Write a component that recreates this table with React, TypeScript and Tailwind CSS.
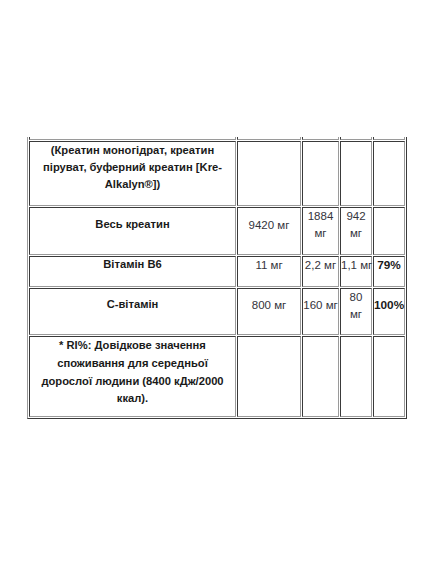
import React from "react";

const cell =
  "p-0 align-middle text-center border border-t-[#3a3a3a] border-l-[#3a3a3a] border-r-[#9a9a9a] border-b-[#9a9a9a]";
const cellTop =
  "p-0 align-top text-center border border-t-[#3a3a3a] border-l-[#3a3a3a] border-r-[#9a9a9a] border-b-[#9a9a9a]";
const lab =
  "font-bold text-[11.2px] leading-[17px] text-[#1a1a1a] -mt-[1px] pb-[13px] whitespace-nowrap";
const num = "text-[11.5px] leading-[17px] text-[#34343c] pb-[12px] whitespace-nowrap";
const num2 = "text-[11.5px] leading-[17px] text-[#34343c] pb-[11px] whitespace-nowrap";
const pct = "font-bold text-[11.8px] leading-[17px] text-[#1a1a1a] pb-[12px] whitespace-nowrap";

export default function App() {
  return (
    <div
      className="w-[435px] h-[569px] bg-white"
      style={{ fontFamily: "'Liberation Sans', Arial, sans-serif" }}
    >
      <div className="pt-[137px] pl-[27px]">
        <div className="w-[380px] overflow-hidden">
          <table className="-mt-[19px] table-fixed w-[380px] border-separate border-spacing-[1px] border border-t-[#9a9a9a] border-l-[#9a9a9a] border-r-[#3a3a3a] border-b-[#3a3a3a]">
            <tbody>
              <tr>
                <td className={`${cell} w-[207px] h-[20px]`}></td>
                <td className={`${cell} w-[64px] h-[20px]`}></td>
                <td className={`${cell} w-[37px] h-[20px]`}></td>
                <td className={`${cell} w-[32px] h-[20px]`}></td>
                <td className={`${cell} w-[32px] h-[20px]`}></td>
              </tr>
              <tr>
                <td className={`${cellTop} h-[65px]`}>
                  <div className="font-bold text-[11.2px] leading-[17px] text-[#1a1a1a] whitespace-nowrap">
                    (Креатин моногідрат, креатин
                    <br />
                    піруват, буферний креатин [Kre-
                    <br />
                    Alkalyn®])
                  </div>
                </td>
                <td className={`${cell} h-[65px]`}></td>
                <td className={`${cell} h-[65px]`}></td>
                <td className={`${cell} h-[65px]`}></td>
                <td className={`${cell} h-[65px]`}></td>
              </tr>
              <tr>
                <td className={`${cell} h-[48px]`}>
                  <div className={lab}>Весь креатин</div>
                </td>
                <td className={`${cell} h-[48px]`}>
                  <div className={num}>9420 мг</div>
                </td>
                <td className={`${cell} h-[48px]`}>
                  <div className={num}>
                    1884
                    <br />
                    мг
                  </div>
                </td>
                <td className={`${cell} h-[48px]`}>
                  <div className={num}>
                    942
                    <br />
                    мг
                  </div>
                </td>
                <td className={`${cell} h-[48px]`}></td>
              </tr>
              <tr>
                <td className={`${cell} h-[31px]`}>
                  <div className={lab}>Вітамін B6</div>
                </td>
                <td className={`${cell} h-[31px]`}>
                  <div className={num}>11 мг</div>
                </td>
                <td className={`${cell} h-[31px]`}>
                  <div className={num}>2,2 мг</div>
                </td>
                <td className={`${cell} h-[31px]`}>
                  <div className={num}>1,1 мг</div>
                </td>
                <td className={`${cell} h-[31px]`}>
                  <div className={pct}>79%</div>
                </td>
              </tr>
              <tr>
                <td className={`${cell} h-[47px]`}>
                  <div className={lab}>C-вітамін</div>
                </td>
                <td className={`${cell} h-[47px]`}>
                  <div className={num}>800 мг</div>
                </td>
                <td className={`${cell} h-[47px]`}>
                  <div className={num}>160 мг</div>
                </td>
                <td className={`${cell} h-[47px]`}>
                  <div className={num2}>
                    80
                    <br />
                    мг
                  </div>
                </td>
                <td className={`${cell} h-[47px]`}>
                  <div className={pct}>100%</div>
                </td>
              </tr>
              <tr>
                <td className={`${cellTop} h-[81px]`}>
                  <div className="font-bold text-[11.2px] leading-[17.8px] text-[#1a1a1a] whitespace-nowrap">
                    * RI%: Довідкове значення
                    <br />
                    споживання для середньої
                    <br />
                    дорослої людини (8400 кДж/2000
                    <br />
                    ккал).
                  </div>
                </td>
                <td className={`${cell} h-[81px]`}></td>
                <td className={`${cell} h-[81px]`}></td>
                <td className={`${cell} h-[81px]`}></td>
                <td className={`${cell} h-[81px]`}></td>
              </tr>
            </tbody>
          </table>
        </div>
      </div>
    </div>
  );
}
